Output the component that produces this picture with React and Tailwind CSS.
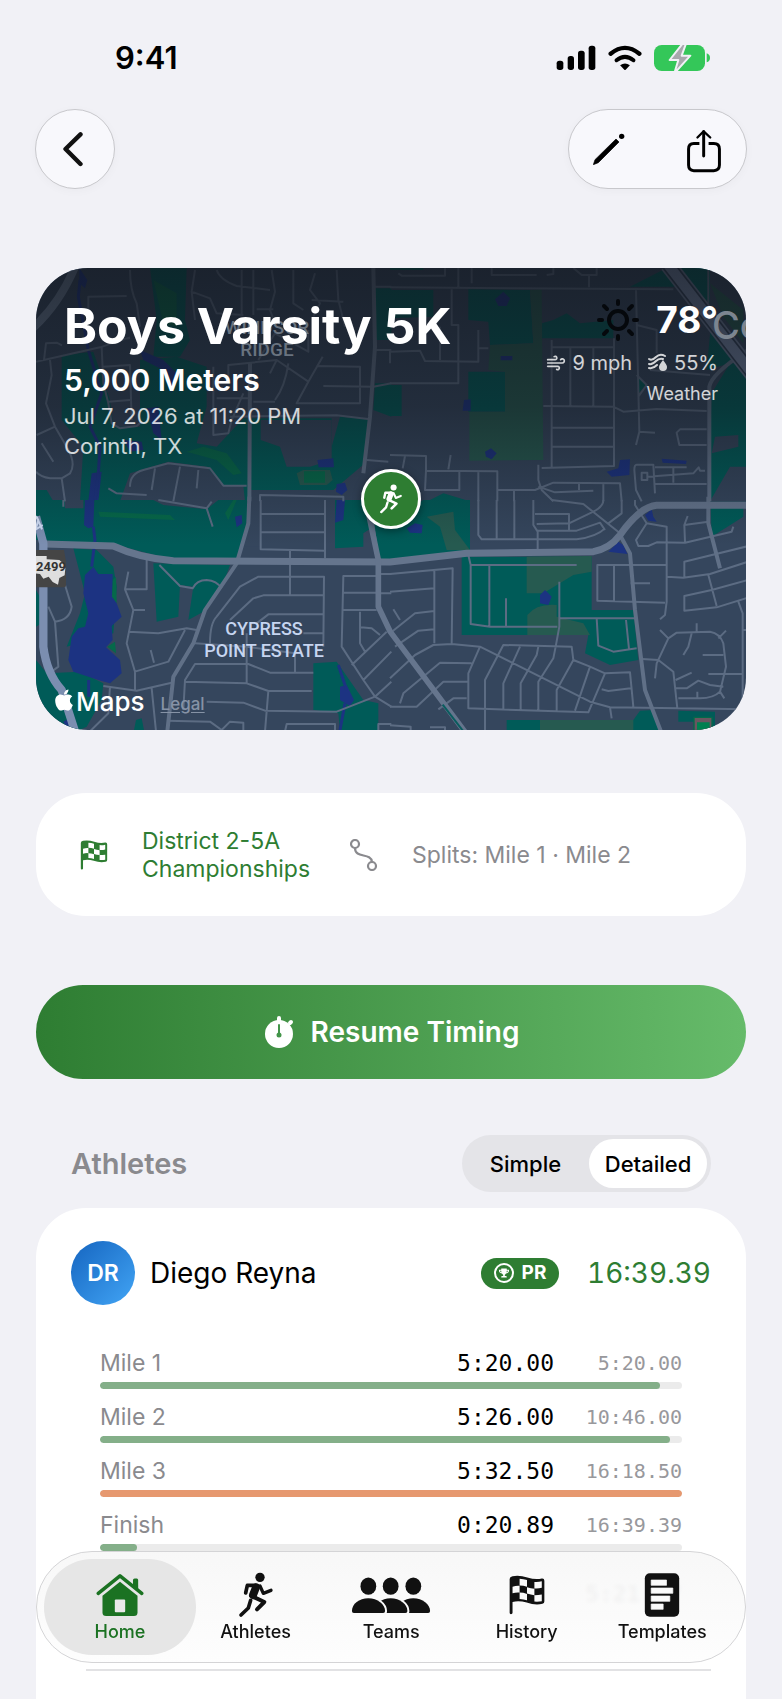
import React, { useState } from 'react';
import { FaApple, FaTrophy } from 'react-icons/fa';
import { Wind } from 'lucide-react';

const splits = [
    { label: 'Mile 1', time: '5:20.00', total: '5:20.00', percent: 96.2, best: true },
    { label: 'Mile 2', time: '5:26.00', total: '10:46.00', percent: 98, best: true },
    { label: 'Mile 3', time: '5:32.50', total: '16:18.50', percent: 100, best: false },
    { label: 'Finish', time: '0:20.89', total: '16:39.39', percent: 6.3, best: true },
];

/* ---------- map ---------- */

// The map is drawn in four tiles, each with its own origin
const tiles = [
    {
        origin: 'translate(-18 -24)',
        parks: [
            'M360 24H470L465 180L480 240L450 290L370 290L380 180Z',
            'M95 285L190 275L240 420L250 500L330 500L330 300L440 290L530 320V440L500 550L560 560L640 475L905 475V560L930 470L1015 478L1005 610L910 690H660V724H150L160 560L95 480Z',
            'M1035 85H1084V240H1035ZM1035 370H1084V470L1030 450Z',
            'M18 690L50 690L70 724H18Z',
        ],
        land: ['M270 724L300 640L415 605L530 620L580 677H640L645 724Z', 'M692 480H905V600L840 620L770 620L750 560L692 540Z'],
        olive: ['M800 640L820 630H900L908 660L890 675H810Z'],
        grass: ['M520 560L590 580L635 640L610 645L560 600L470 575Z', 'M370 60L440 100V200L400 190Z', 'M822 634H885V668H822Z'],
        water: ['M148 24L172 60L165 85L148 70Z', 'M330 270L400 300L440 340L425 400L400 330L340 300Z', 'M350 445L385 440L395 540L370 520Z', 'M280 540L335 545L340 570L300 575Z', 'M920 672L945 668L952 690L935 705L918 695Z', 'M862 600L910 595L912 622H866Z', 'M185 640L215 635L205 724H175Z'],
        streams: 'M150 60L145 110L175 270L215 400L180 500L210 560L205 640L195 720',
        highways: 'M8 205Q90 130 138 14',
        arterials: 'M1030 24L1035 260L1020 470L1000 640M660 310L658 724',
        streets: 'M18 305L210 262L300 232M175 150V110L290 108M300 30Q300 90 320 130L330 200M210 215Q220 245 300 235M60 300L65 345L48 430L75 500L110 560Q140 610 120 640L95 655L60 655Q30 650 18 635M95 655L105 724M20 525L75 500M35 550L70 605M42 300L48 250L80 248L96 256M215 262L220 370L235 430L245 490L270 505L320 498L335 485M220 320L300 315L305 480M235 425L300 420M495 30L485 95L540 115L560 160L640 165M485 95L495 180M560 30Q570 60 620 78L720 90M635 30V165M670 30V165M725 30L735 95L720 150L735 190M680 148H730M790 30V130L820 150M855 40L840 90L870 130L850 170M920 30L925 120L945 200M845 120L940 125M595 350V315L740 300L720 340M740 300L835 365L800 430H990V320L860 318M878 290L835 365L800 430M880 378L1030 380L1084 370M685 300L735 220L835 275V210M550 320V525L595 520L605 480L640 400M735 420Q765 380 775 310M560 415H665M670 425H735M600 470L920 466L1020 478M300 680Q300 640 340 630L415 610L540 625L580 677H650M375 625L365 690M450 620L430 724M505 630L500 685M235 685L260 700L350 705M690 724V705L940 710V724M1010 600L1075 605M1035 80H1084M1035 270H1084',
    },
    {
        origin: 'translate(1062 -24)',
        parks: ['M0 90H130V170L0 175Z', 'M235 88L420 90L430 250L300 255L295 185L235 180Z', 'M235 335H345V455H235Z', 'M455 190L490 180L530 160L570 190L670 180V235H455Z', 'M720 80L830 24H960V130L900 80Z', 'M965 170L1070 290L1020 310L950 330Z', 'M965 400L1020 310H1084V724H955Z', 'M0 375H35V468H0Z', 'M120 720L160 700L240 724Z', 'M742 350L768 375L745 400Z', 'M0 24H100V30H0Z'],
        land: ['M975 530L1045 525V560L965 580Z', 'M1020 620H1084V724H960Z'],
        olive: ['M420 90L455 88L460 600L238 602V455H345V335L295 330L300 255L430 250Z', 'M960 70L1060 150V250L1000 170Z'],
        grass: [],
        water: ['M315 118L340 95L360 115L350 138H325Z', 'M332 288H367V301H332Z', 'M222 420L242 418V452L218 452Z', 'M285 575L303 565L320 580L305 598L288 590Z', 'M650 635L685 625L690 600L720 598L718 645L665 650Z', 'M815 596L890 602L888 612L818 608Z'],
        streams: '',
        highways: 'M834 14L1094 350',
        arterials: 'M958 724V380Q965 340 1074 270',
        streets: 'M0 82L850 88M25 40L35 47H165V24M205 24V82M245 24V70M305 24V45H440M470 45L490 42V24M550 24L575 45H620V24M597 45V82M185 88V195H205V370H0M0 310V275L90 272L105 303L265 305V210M265 265H295M150 200V300M485 240V620M485 262H672M541 262V438M610 262V438M672 235V618L455 624M460 438L670 440L700 455L800 447L950 453M485 503H670M485 560H670M738 90L748 515L738 555M748 515L795 518M740 195L800 210V280M740 345L770 375L745 410M955 24V130M780 330L960 345M950 508H870L860 518L868 555H950M0 585L108 588V632L322 634V724M45 588L38 625M182 585L175 628M108 632L105 690H208V634M265 634V724M322 690H435L490 668L690 670L695 724M445 614V660L455 690L490 724M567 668V690M640 668V724M372 690V724M445 680L495 697L610 692M795 700L790 614L740 614Q733 614 733 630L738 690L755 724M755 638H772V660H755ZM795 622H890M772 650L910 640L926 622L930 632L945 632M850 625V668M795 672H950',
    },
    {
        origin: 'translate(-18 696)',
        parks: ['M18 0H658L655 60L625 175L430 180L260 135L18 120Z', 'M130 145L200 150L250 200L260 260L250 400L110 440L150 340L165 280Z', 'M370 190L600 195L575 265L520 335L475 360L490 260L450 255L445 350L380 365Z', 'M18 480L50 520L150 515L220 550L215 600L170 680L140 694H18Z', 'M18 270L35 300V370L18 380Z', 'M850 490L920 485L1000 600L1045 610V694H930L925 640L850 630Z', 'M915 0H1084V180L1045 180L1030 80L1000 100V140L915 145Z', 'M318 660L335 655L342 690H312Z'],
        land: ['M370 0L400 15L530 28L565 0Z', 'M105 0H160V25H105Z', 'M658 0H695V140H640Z'],
        olive: [],
        grass: ['M205 35L420 45L435 60L210 50Z', 'M585 40L610 0H620L595 60Z', 'M248 240L258 230L260 310L245 300Z', 'M232 440L255 425L258 460Z'],
        water: ['M165 0H193L190 80L175 85L162 75Z', 'M165 225L190 200L205 222L248 222L246 290L260 310L275 350L245 378L248 420L228 442L270 480L275 520L240 550L205 540L130 515L115 480L125 410L145 385L165 380L175 340L160 280Z', 'M615 50L635 45L637 70L620 82Z', 'M920 0H945L940 60L915 68Z', 'M930 560L950 555L972 600L960 618L930 600Z', 'M100 665L118 655L115 690Z'],
        streams: 'M190 80L195 120L185 200M176 540V590M925 495L950 570M945 610L930 690',
        highways: 'M18 50L40 130V440Q50 520 95 570L138 704',
        arterials: 'M658 -10L655 70L620 190L525 330L490 430L430 530L412 694',
        streets: 'M350 180V268H285L295 215M285 268L310 330H345M310 330L290 430L315 515V570M295 395L385 400L470 385L500 390M465 390L415 485L315 515M362 450L372 488M220 558L320 572L425 548M365 565L378 694M388 195L450 258L488 265Q500 240 530 240Q560 242 575 265M105 255L125 320Q120 360 75 365L55 320M75 365L85 500L65 515M385 0L530 25L545 5M530 25L548 80M100 0V20M692 0V148L885 152V0M692 42H885M692 97H885M780 152V285M885 152V175M540 430Q540 370 560 350L630 260L685 230H882L880 440M600 360L670 295L700 286H880M680 370L715 343H880M820 400H880M495 430L650 440V550M650 400V440L795 460V515M850 518H720L655 492H495L465 540L460 630M465 545L650 550L715 573H845M715 573L705 694M530 605L640 608L705 632L920 635L1035 590M412 662L540 665L575 690L600 665L640 668V694M765 694L770 672H915V694M1040 228H940L935 440L1000 540L1035 590L1084 620M940 278H1040M938 330H1040M990 335V430L1005 455M992 382L1025 385L1050 405M1070 395L965 495M1084 455L1000 540M1035 590L1084 545M1045 694V672H1084M1045 222H1084M1045 280H1084M240 560L235 640L180 694M1030 70L1045 180V320L1084 400',
    },
    {
        origin: 'translate(1062 696)',
        parks: ['M0 60L100 0H240V150L0 180Z', 'M215 170H605V330H730L745 480L660 495L585 460L595 405H215Z', 'M962 20L1060 25V50L965 110Z', 'M350 660H730L750 632L790 630L810 694H350Z', 'M865 632L975 635V694L930 665H865Z'],
        land: [],
        olive: ['M410 170L605 168V215L550 225L460 280H410Z', 'M412 345Q440 310 500 315V350L580 370L600 405H412Z', 'M110 50L190 35L195 90L240 150H170L150 80Z', 'M450 660H730V694H450Z'],
        grass: ['M910 650H968V694H910Z'],
        water: ['M50 85L75 70L98 75L95 100L60 98Z', 'M655 155L685 125L700 135L712 162Z', 'M765 45L785 28L790 50L800 65L775 62Z', 'M450 285L465 270L475 280L485 290L475 315L450 310Z'],
        streams: '',
        highways: '',
        arterials: 'M690 105L720 160L735 330L765 570L815 700M955 -10V70L990 205',
        streets: 'M265 0V105L275 118H560Q620 110 645 85M320 0V118M373 0V118M430 0V75L443 95V155M435 42H537V90M440 72L537 70L610 35Q640 20 640 0M443 92H560L630 68L645 90M485 0L580 12L690 100M655 70L695 40V0M735 0V15L770 70L830 80V305L825 345L810 358M770 70L738 120L745 138H775L800 127L885 128L1025 95L1030 80M885 125L883 75L893 48M883 75L955 65M1084 136L883 185V230M832 230L880 233L960 222L1084 182M955 225L980 318M1084 237L965 270L883 288V332L980 322L1084 290M1045 305L1058 340V628M1058 390H1084M235 165L242 195H560M242 195V372L300 380H502M298 197V377M348 295V378M508 245V380L497 440M510 355H735M620 355L625 437L670 455L740 445M708 360L717 447M830 195H622V302L825 308M672 197V302M722 250H780M0 222L188 205L185 430M133 213V430M0 275L133 265M10 328L30 360M0 400L75 340L133 333M15 440L85 392L133 388M0 535L75 465L130 435L185 432L270 440L600 605L660 622L1084 628M270 440L235 520V625L595 637L645 520L600 500L550 480L545 440L340 435L285 540V694M390 440L340 550V630M445 440L440 465L392 550V630M497 440L490 475L445 545V632M550 480L500 570V632M600 500L555 632M645 520L720 517L730 620M635 568L655 573L722 565M660 622L665 655M0 620H80L160 545H232M30 610L40 580L150 488L245 490M145 628L190 595H230M0 676L62 680V694M120 682H165V694M795 535L800 490L835 415L860 398L960 395Q990 400 1000 430L1008 500L990 575Q970 595 930 595H865M810 390L835 415M920 370V395M1008 392L985 415M905 400L895 440L880 465M938 465H1000M955 522H1058M757 477L805 480L850 515L862 625M855 565H890L925 542L960 555L1000 560M857 540L905 518M922 575V592M990 575L1003 595',
    },
];

const MapArt = () => (
    <svg className='absolute inset-0 h-full w-full' viewBox='0 0 2130 1386' preserveAspectRatio='xMidYMid slice' fill='none' strokeLinejoin='round' aria-hidden='true'>
        <defs>
            <linearGradient id='mapShade' x1='0' y1='0' x2='0' y2='1'>
                <stop offset='0' stopColor='#10141b' stopOpacity='0.72' />
                <stop offset='0.3' stopColor='#10141b' stopOpacity='0.5' />
                <stop offset='0.6' stopColor='#10141b' stopOpacity='0' />
            </linearGradient>
        </defs>
        <rect width='2130' height='1386' fill='#35465d' />
        {tiles.map(tile => (
            <g key={tile.origin} transform={tile.origin}>
                <path d={tile.parks.join('')} fill='#005b58' />
                <path d={tile.land.join('')} fill='#35465d' />
                <path d={tile.olive.join('')} fill='#265a50' />
                <path d={tile.grass.join('')} fill='#05694a' />
                <path d={tile.water.join('')} fill='#1c3382' />
                <path d={tile.streams} stroke='#1c3382' strokeWidth='9' />
            </g>
        ))}
        {tiles.map(tile => (
            <g key={tile.origin} transform={tile.origin}>
                <path d={tile.streets} stroke='#5c6c83' strokeWidth='6' />
                <path d={tile.arterials} stroke='#607087' strokeWidth='12' />
            </g>
        ))}
        <path d='M27 828L232 834Q312 871 412 878L1062 882L1292 856L1672 851Q1722 841 1752 801Q1812 716 1862 712H2140' stroke='#65758d' strokeWidth='21' />
        <path d='M990 700L1027 876V1016L1062 1090L1290 1396' stroke='#65758d' strokeWidth='17' />
        <path d='M1220 1310L1282 1390' stroke='#0a5c5e' strokeWidth='6' />
        <path d={tiles[0].highways} transform={tiles[0].origin} stroke='#6b7d96' strokeWidth='24' />
        <g transform={tiles[1].origin}>
            <path d={tiles[1].highways} stroke='#6b7a96' strokeWidth='50' />
            <path d={tiles[1].highways} stroke='#303f56' strokeWidth='40' />
            <path d={tiles[1].highways} stroke='#7485a5' strokeWidth='30' />
        </g>
        <path d={tiles[2].highways} transform={tiles[2].origin} stroke='#7b8eb0' strokeWidth='25' />
        <g transform={tiles[3].origin}>
            <path d='M914 654H964V694H914Z' fill='#6a5560' />
            <path d='M921 667H959V694H921Z' fill='#008050' />
        </g>
        <rect width='2130' height='1386' fill='url(#mapShade)' />
        <g transform={tiles[2].origin}>
            <path d='M10 40L25 60L18 85M15 90L38 75M20 50L36 88' stroke='#c3cfe6' strokeWidth='6' />
            <path d='M10 150H102L108 185V255Q108 262 100 262H10Z' fill='#454545' />
            <path d='M10 168H50V178L88 180L102 192L106 205L104 226L88 234L84 254L68 246L56 230L40 236L30 222L10 220Z' fill='#dedede' />
        </g>
    </svg>
);

/* ---------- icons ---------- */

const RunnerIcon = ({ className }) => (
    <svg className={className} viewBox='622 94 108 138' fill='none' stroke='currentColor' strokeLinecap='round' strokeLinejoin='round' aria-hidden='true'>
        <circle cx='688' cy='110' r='14' fill='currentColor' stroke='none' />
        <path d='M676 134H650L645 157' strokeWidth='11' />
        <path d='M676 140L667 163' strokeWidth='24' />
        <path d='M688 136L698 158L721 149' strokeWidth='10' />
        <path d='M665 167L701 184L679 206' strokeWidth='12' />
        <path d='M660 179L653 202L631 223' strokeWidth='11' />
    </svg>
);

const FlagIcon = ({ className, check }) => (
    <svg className={className} viewBox='355 100 112 123' aria-hidden='true'>
        <path d='M357 112Q357 105 366 103Q388 99 412 107Q438 115 457 110Q465 109 465 117V182Q465 188 459 189Q436 194 410 185Q386 178 366 183V217Q366 221 361 221Q357 221 357 217Z' fill='currentColor' />
        <path d='M388 111Q400 112 411 115V136Q400 132 388 132ZM434 121Q446 122 457 119V139Q446 142 434 141ZM366 136Q377 132 388 133V154Q377 153 366 156ZM411 137Q423 141 434 142V162Q423 161 411 157ZM388 154Q400 154 411 158V178Q400 175 388 174ZM434 162Q446 162 457 160V181Q446 183 434 182Z' fill={check} />
    </svg>
);

const HomeIcon = () => (
    <svg className='h-11 w-12' viewBox='196 96 148 134' fill='currentColor' aria-hidden='true'>
        <path d='M203 158L270 104L337 158' fill='none' stroke='currentColor' strokeWidth='11' strokeLinecap='round' strokeLinejoin='round' />
        <path d='M310 117Q310 112 315 112H322Q326 112 326 117V145L310 132Z' />
        <path d='M270 122L324 165V217Q324 228 313 228H227Q216 228 216 217V165Z' />
        <rect x='254' y='177' width='32' height='39' rx='3' fill='#e9e9e9' />
    </svg>
);

const TeamsIcon = () => {
    const body = 'M963 210C963 188 985 171 1013 171C1041 171 1064 190 1064 210Q1064 216 1058 216H969Q963 216 963 210Z';
    return (
        <svg className='h-11 w-20' viewBox='962 94 240 134' fill='currentColor' aria-hidden='true'>
            <path d={body} transform='translate(137)' />
            <path d={body} transform='translate(68)' stroke='#fafafa' strokeWidth='12' />
            <path d={body} transform='translate(68)' />
            <path d={body} stroke='#fafafa' strokeWidth='12' />
            <path d={body} />
            <ellipse cx='1013' cy='134' rx='24' ry='26' />
            <ellipse cx='1081' cy='134' rx='24' ry='26' />
            <ellipse cx='1150' cy='134' rx='24' ry='26' />
        </svg>
    );
};

const TemplatesIcon = () => (
    <svg className='h-11 w-9' viewBox='764 97 105 132' aria-hidden='true'>
        <rect x='765' y='98' width='103' height='130' rx='15' fill='currentColor' />
        <path d='M784 118H830V134H784ZM784 142H849V158H784ZM784 166H840V182H784ZM784 190H820V206H784Z' fill='#fafafa' stroke='#fafafa' strokeWidth='2' strokeLinejoin='round' />
    </svg>
);

const RouteIcon = () => (
    <svg className='h-8 w-7' viewBox='0 0 28 32' fill='none' stroke='currentColor' strokeWidth='2.2' aria-hidden='true'>
        <circle cx='5' cy='5' r='4' />
        <circle cx='22' cy='27' r='4' />
        <path d='M5 9C5 20 21 13 22 23' />
    </svg>
);

const StopwatchIcon = () => (
    <svg className='h-8 w-8' viewBox='0 0 32 32' aria-hidden='true'>
        <circle cx='16' cy='18' r='14' fill='currentColor' />
        <path d='M16 2V6M27 7L28 6' stroke='currentColor' strokeWidth='4' strokeLinecap='round' />
        <path d='M16 9V18' stroke='#43954a' strokeWidth='2' strokeLinecap='round' />
        <circle cx='16' cy='19' r='2.5' fill='#43954a' />
    </svg>
);

const SunIcon = () => (
    <svg className='h-11 w-11' viewBox='0 0 44 44' fill='none' stroke='#05080c' strokeWidth='4' strokeLinecap='round' aria-hidden='true'>
        <circle cx='22' cy='22' r='9' />
        <path d='M22 3V6M22 38V41M3 22H6M38 22H41M8 8L11 11M33 33L36 36M8 36L11 33M33 11L36 8' />
    </svg>
);

const HumidityIcon = () => (
    <svg className='h-5 w-5' viewBox='0 0 20 20' fill='none' stroke='currentColor' strokeWidth='2' strokeLinecap='round' aria-hidden='true'>
        <path d='M1 6Q4 8 8 4Q12 0 17 3M1 11Q4 12 8 8Q11 5 15 6M1 15Q5 16 9 12' />
        <path d='M15 7Q19 12 19 14A4 4 0 0 1 11 14Q11 12 15 7Z' fill='currentColor' stroke='none' />
    </svg>
);

/* ---------- sections ---------- */

const StatusBar = () => (
    <div className='flex h-[109px] items-start justify-between pt-[37px] pr-9 pl-[79px]'>
        <span className='text-[31px] leading-[42px] font-semibold'>9:41</span>
        <div className='flex h-[42px] items-center gap-3'>
            <svg className='h-[26px] w-10' viewBox='490 133 120 78' aria-hidden='true'>
                <rect x='492' y='180' width='20' height='28' rx='8' />
                <rect x='525' y='166' width='19' height='42' rx='8' />
                <rect x='556' y='150' width='20' height='58' rx='8' />
                <rect x='588' y='135' width='20' height='73' rx='8' />
            </svg>
            <svg className='h-[26px] w-[34px]' viewBox='648 133 104 78' fill='none' stroke='#000' strokeLinecap='round' aria-hidden='true'>
                <path d='M656 159Q700 123 744 159' strokeWidth='13' />
                <path d='M674 179Q700 158 726 179' strokeWidth='12' />
                <path d='M685 194Q700 184 715 194L702 208Q700 210 698 208Z' fill='#000' stroke='none' />
            </svg>
            <svg className='h-[26px] w-14' viewBox='789 135 168 78' aria-hidden='true'>
                <rect x='789' y='135' width='153' height='78' rx='23' fill='#34c759' />
                <path d='M947 160Q957 163 957 174Q957 184 947 187Z' fill='#34c759' />
                <path d='M877 128L836 180H862L850 220L898 167H872L886 128Z' fill='#a8a8ad' stroke='#f1f1f6' strokeWidth='6' strokeLinejoin='round' />
            </svg>
        </div>
    </div>
);

const NavBar = () => (
    <nav className='-mx-px flex h-20 justify-between text-black'>
        <button aria-label='Back' className='flex size-20 items-center justify-center rounded-full border border-[#c8c8cc] bg-[#f8f8fc] pr-1 shadow-[0_2px_10px_rgba(0,0,0,0.03)]'>
            <svg className='h-9 w-6' viewBox='184 396 64 106' fill='none' stroke='#111' strokeWidth='13' strokeLinecap='round' strokeLinejoin='round' aria-hidden='true'>
                <path d='M238 406L194 449L238 493' />
            </svg>
        </button>
        <div className='flex w-[179px] items-center justify-between rounded-full border border-[#c8c8cc] bg-[#f8f8fc] px-5 shadow-[0_2px_10px_rgba(0,0,0,0.03)]'>
            <button aria-label='Edit' className='flex size-10 items-center justify-center'>
                <svg className='size-8' viewBox='606 400 96 96' fill='none' stroke='#000' aria-hidden='true'>
                    <path d='M607 495L612 480L675 418L684 427L622 489Z' fill='#000' strokeWidth='2' strokeLinejoin='round' />
                    <circle cx='692' cy='410' r='8' fill='#000' stroke='none' />
                </svg>
            </button>
            <button aria-label='Share' className='flex size-11 items-center justify-center pt-1'>
                <svg className='h-11 w-9' viewBox='886 386 108 134' fill='none' stroke='#000' strokeWidth='9' strokeLinecap='round' strokeLinejoin='round' aria-hidden='true'>
                    <path d='M926 430H909Q893 430 893 447V496Q893 513 909 513H970Q987 513 987 496V447Q987 430 970 430H954' strokeLinecap='butt' />
                    <path d='M939 468V394' />
                    <path d='M920 412L939 393L959 412' strokeWidth='7' />
                </svg>
            </button>
        </div>
    </nav>
);

const MapCard = () => (
    <section className='relative mt-[79px] flex h-[462px] flex-col justify-between overflow-hidden rounded-[52px] text-white'>
        <MapArt />
        <span className='absolute top-[49px] left-[183px] w-24 text-center font-[Roboto] text-[19px] leading-[22px] font-medium text-[#69737f]'>WINDSOR RIDGE</span>
        <span className='absolute top-[350px] left-[153px] w-[150px] text-center font-[Roboto] text-[18px] leading-[22px] font-medium text-[#c6d5f0]'>
            CYPRESS<br />POINT ESTATE
        </span>
        <span className='absolute top-[38px] left-[676px] text-[38px] leading-[38px] font-medium text-[#7c8590]'>Corinth</span>
        <span className='absolute top-[289px] left-0 font-[Roboto] text-[13px] leading-[20px] font-bold text-[#333]'>2499</span>
        <div className='absolute inset-0 flex items-center justify-center'>
            <div className='flex size-[60px] items-center justify-center rounded-full border-[3px] border-white bg-[#2e7d32] shadow-[0_2px_8px_rgba(0,0,0,0.4)]'>
                <RunnerIcon className='h-[30px] w-7' />
            </div>
        </div>
        <div className='relative flex items-start justify-between px-7 pt-[27px]'>
            <div>
                <h1 className='text-[50px] leading-[62px] font-bold'>Boys Varsity 5K</h1>
                <p className='pt-0.5 text-[30px] leading-[42px] font-semibold'>5,000 Meters</p>
                <p className='text-[22px] leading-[30px] text-white/80'>Jul 7, 2026 at 11:20 PM</p>
                <p className='text-[22px] leading-[30px] text-white/80'>Corinth, TX</p>
            </div>
            <div className='flex flex-col items-end text-white/80'>
                <div className='flex items-center gap-4 text-white'>
                    <SunIcon />
                    <span className='text-[37px] leading-[50px] font-bold'>78°</span>
                </div>
                <div className='flex items-center gap-4 text-[20px] leading-[36px]'>
                    <span className='flex items-center gap-1.5'><Wind className='size-5' />9 mph</span>
                    <span className='flex items-center gap-1.5'><HumidityIcon />55%</span>
                </div>
                <a href='#weather' className='text-[18px] leading-[26px]'>Weather</a>
            </div>
        </div>
        <div className='relative flex items-end px-4 pb-3'>
            <FaApple className='mb-1.5 size-6' />
            <span className='text-[26px] leading-[32px] font-medium'>Maps</span>
            <a href='#legal' className='ml-4 text-[17px] leading-[28px] font-medium text-[#8693a6] underline underline-offset-2'>Legal</a>
        </div>
    </section>
);

const InfoCard = () => (
    <section className='mt-[63px] flex min-h-[123px] items-center rounded-[50px] bg-white px-11 text-[23px] leading-[28px]'>
        <FlagIcon className='h-[30px] w-7 text-[#2e7d32]' check='#fff' />
        <a href='#meet' className='ml-[34px] w-[172px] text-[#2e7d32]'>District 2-5A Championships</a>
        <span className='ml-9 text-[#8a8a8e]'><RouteIcon /></span>
        <p className='ml-[34px] text-[#8a8a8e]'>Splits: Mile 1 · Mile 2</p>
    </section>
);

const AthletesHeader = () => {
    const [mode, setMode] = useState('Detailed');
    return (
        <div className='mt-14 flex h-[57px] items-center justify-between px-[35px]'>
            <h2 className='text-[29px] leading-[36px] font-semibold text-[#8a8a8e]'>Athletes</h2>
            <div className='flex h-[57px] w-[249px] items-center rounded-full bg-[#e4e4e8] p-1 text-[22px] leading-[28px] font-medium'>
                {['Simple', 'Detailed'].map(item => (
                    <button
                        key={item}
                        onClick={() => setMode(item)}
                        className={mode === item ? 'h-full w-[118px] rounded-full bg-white' : 'h-full flex-1 pr-1'}
                    >
                        {item}
                    </button>
                ))}
            </div>
        </div>
    );
};

const SplitRow = ({ split }) => (
    <li>
        <div className='flex items-center text-[23px] leading-[30px]'>
            <span className='flex-1 text-[#8a8a8e]'>{split.label}</span>
            <span className='font-["DejaVu_Sans_Mono",monospace]'>{split.time}</span>
            <span className='w-32 text-right font-["DejaVu_Sans_Mono",monospace] text-[20px] text-[#98989c]'>{split.total}</span>
        </div>
        <div className='mt-1 h-[7px] overflow-hidden rounded-full bg-[#ebebeb]'>
            <div className={split.best ? 'h-full rounded-full bg-[#84af89]' : 'h-full rounded-full bg-[#e6986f]'} style={{ width: `${split.percent}%` }} />
        </div>
    </li>
);

const AthleteCard = () => (
    <section className='mt-4 flex-1 rounded-t-[50px] bg-white pt-[33px]'>
        <div className='flex items-center px-[35px]'>
            <div className='flex size-16 items-center justify-center rounded-full bg-linear-to-br from-[#1565c0] to-[#42a5f5] text-[23px] font-semibold text-white'>DR</div>
            <h3 className='ml-[15px] flex-1 text-[28px] leading-[36px]'>Diego Reyna</h3>
            <span className='flex h-[31px] w-[78px] items-center justify-center gap-2 rounded-full bg-[#2e7d32] text-[19px] font-bold text-white'>
                <span className='flex size-5 items-center justify-center rounded-full border-2 border-white'>
                    <FaTrophy className='size-2.5' />
                </span>
                PR
            </span>
            <span className='ml-7 text-[28px] leading-[36px] text-[#2e7d32] tabular-nums'>16:39.39</span>
        </div>
        <ul className='mt-[43px] flex flex-col gap-[13px] px-16'>
            {splits.map(split => <SplitRow key={split.label} split={split} />)}
        </ul>
        <p className='mt-7 px-16 text-right font-["DejaVu_Sans_Mono",monospace] text-[23px] leading-[30px] font-bold'>5:21.67</p>
        <div className='mt-[60px] mr-[35px] ml-[50px] h-0.5 bg-[#e2e2e4]' />
    </section>
);

const tabs = [
    { label: 'Home', icon: <HomeIcon /> },
    { label: 'Athletes', icon: <RunnerIcon className='h-[46px] w-9' /> },
    { label: 'Teams', icon: <TeamsIcon /> },
    { label: 'History', icon: <FlagIcon className='h-10 w-9' check='#fafafa' /> },
    { label: 'Templates', icon: <TemplatesIcon /> },
];

const TabBar = () => (
    <nav className='fixed inset-x-9 bottom-9 flex h-[112px] items-center rounded-full border border-[#d4d4d6] bg-linear-to-b from-[#f7f7f7]/97 to-[#fdfdfd]/97 px-[15px] backdrop-blur-[2px]'>
        {tabs.map(tab => (
            <a
                key={tab.label}
                href={`#${tab.label.toLowerCase()}`}
                className={tab.label === 'Home'
                    ? '-mx-2 flex h-24 w-0 grow-[1.12] flex-col items-center rounded-full bg-[#e6e6e6] pt-[13px] text-[#1b7222]'
                    : 'flex h-24 w-0 grow flex-col items-center pt-[13px] text-[#111]'}
            >
                <span className='flex h-[46px] items-center'>{tab.icon}</span>
                <span className='text-[18px] leading-[28px] font-medium'>{tab.label}</span>
            </a>
        ))}
    </nav>
);

const App = () => {
    return (
        <div className='flex min-h-screen flex-col overflow-hidden bg-[#f1f1f6] px-9 font-[Inter,sans-serif] text-black'>
            <StatusBar />
            <NavBar />
            <MapCard />
            <InfoCard />
            <button className='mt-[69px] flex h-[94px] w-full shrink-0 items-center justify-center gap-4 rounded-full bg-linear-to-r from-[#2e7d32] to-[#66bb6a] text-[28px] leading-[36px] font-semibold text-white'>
                <StopwatchIcon />
                Resume Timing
            </button>
            <AthletesHeader />
            <AthleteCard />
            <TabBar />
        </div>
    );
};

export default App;
